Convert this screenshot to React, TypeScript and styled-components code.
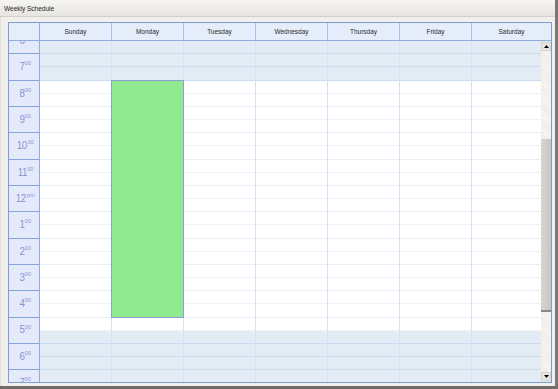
import { useLayoutEffect, useRef } from "react";
import styled, { createGlobalStyle } from "styled-components";

const HOUR = 79 / 3;
const SCROLL = 171;
const days = ["Sunday", "Monday", "Tuesday", "Wednesday", "Thursday", "Friday", "Saturday"];
const hours = Array.from({ length: 24 }, (_, i) => i);

// working time runs from 8:00 to 17:30
const isWork = (t: number) => t >= 8 && t < 17.5;

const label = (h: number) => {
  if (h === 0) return { n: "12", s: "am" };
  if (h === 12) return { n: "12", s: "pm" };
  return { n: String(h > 12 ? h - 12 : h), s: "00" };
};

function App() {
  const viewRef = useRef<HTMLDivElement>(null);

  useLayoutEffect(() => {
    if (viewRef.current) viewRef.current.scrollTop = SCROLL;
  }, []);

  return (
    <Window>
      <GlobalStyle />
      <TitleBar>Weekly Schedule</TitleBar>
      <Body>
        <Frame>
          <Header>
            <Corner />
            {days.map((d, i) => (
              <DayHead key={d} $last={i === days.length - 1}>
                {d}
              </DayHead>
            ))}
          </Header>
          <Main>
            <Viewport ref={viewRef}>
              <Grid>
                <TimeColumn>
                  {hours.map((h) => {
                    const l = label(h);
                    return (
                      <TimeCell key={h}>
                        <Num>{l.n}</Num>
                        <Sup>{l.s}</Sup>
                      </TimeCell>
                    );
                  })}
                </TimeColumn>
                {days.map((d, i) => (
                  <DayColumn key={d} $last={i === days.length - 1}>
                    {hours.map((h) => (
                      <Slot key={h}>
                        <Half $work={isWork(h)} $end={false} />
                        <Half $work={isWork(h + 0.5)} $end />
                      </Slot>
                    ))}
                    {d === "Monday" && (
                      <Appointment
                        style={{ top: 8 * HOUR - 1, height: 9 * HOUR + 1 }}
                      />
                    )}
                  </DayColumn>
                ))}
              </Grid>
            </Viewport>
            <ScrollBar>
              <ArrowButton>
                <svg width="5" height="3" viewBox="0 0 5 3">
                  <path d="M0 3 L2.5 0 L5 3 Z" fill="#000" />
                </svg>
              </ArrowButton>
              <Track>
                <Thumb />
              </Track>
              <ArrowButton>
                <svg width="5" height="3" viewBox="0 0 5 3">
                  <path d="M0 0 L2.5 3 L5 0 Z" fill="#000" />
                </svg>
              </ArrowButton>
            </ScrollBar>
          </Main>
        </Frame>
      </Body>
    </Window>
  );
}

export default App;

const GlobalStyle = createGlobalStyle`
  body {
    margin: 0;
    background: #f1efec;
  }
  * {
    box-sizing: border-box;
  }
`;

const Window = styled.div`
  width: 558px;
  height: 389px;
  display: flex;
  flex-direction: column;
  background: #f1efec;
  border-right: 3px solid #7a7875;
  border-bottom: 3px solid #6e6c69;
  font-family: "Liberation Sans", Arial, sans-serif;
  overflow: hidden;
`;

const TitleBar = styled.div`
  height: 17px;
  flex: none;
  padding-left: 4px;
  display: flex;
  align-items: center;
  font-size: 6.5px;
  color: #1e1e1e;
  background: linear-gradient(#f6f5f3, #e7e5e1);
  border-bottom: 1px solid #d3d0cb;
`;

const Body = styled.div`
  flex: 1;
  padding: 5px 0 0 7px;
  border-left: 1px solid #e2dfdb;
`;

const Frame = styled.div`
  width: 544px;
  height: 361px;
  border: 1px solid #7d9dd6;
  display: flex;
  flex-direction: column;
  background: #fff;
`;

const Header = styled.div`
  height: 18px;
  flex: none;
  display: flex;
  background: #e5edfb;
  border-bottom: 1px solid #8eacde;
`;

const Corner = styled.div`
  width: 31px;
  border-right: 1px solid #8eacde;
`;

const DayHead = styled.div<{ $last?: boolean }>`
  width: ${(p) => (p.$last ? 79 : 72)}px;
  border-right: ${(p) => (p.$last ? "none" : "1px solid #a9c0e8")};
  display: flex;
  align-items: center;
  justify-content: center;
  font-size: 6.5px;
  color: #2b2b2b;
`;

const Main = styled.div`
  flex: 1;
  display: flex;
  min-height: 0;
`;

const Viewport = styled.div`
  flex: 1;
  overflow-y: scroll;
  scrollbar-width: none;
  &::-webkit-scrollbar {
    display: none;
  }
`;

const Grid = styled.div`
  display: flex;
`;

const TimeColumn = styled.div`
  width: 31px;
  flex: none;
  background: #e4eafb;
  border-right: 1px solid #8eacde;
`;

const TimeCell = styled.div`
  height: ${HOUR}px;
  display: flex;
  align-items: center;
  justify-content: center;
  padding-left: 2px;
  border-bottom: 1px solid #86a5da;
  color: #8993cf;
`;

const Num = styled.span`
  font-size: 11.5px;
  letter-spacing: -0.6px;
  transform: scaleX(0.85);
  line-height: 1;
`;

const Sup = styled.span`
  font-size: 5.5px;
  align-self: center;
  margin-top: -7px;
`;

const DayColumn = styled.div<{ $last?: boolean }>`
  position: relative;
  width: ${(p) => (p.$last ? 69 : 72)}px;
  flex: none;
  border-right: ${(p) => (p.$last ? "none" : "1px solid #d6e1f5")};
`;

const Slot = styled.div`
  height: ${HOUR}px;
  display: flex;
  flex-direction: column;
`;

const Half = styled.div<{ $work: boolean; $end: boolean }>`
  flex: 1;
  background: ${(p) => (p.$work ? "#ffffff" : "#e3ebf4")};
  border-bottom: 1px
    ${(p) =>
      p.$work
        ? p.$end
          ? "dotted #d6def2"
          : "dotted #e0e6f5"
        : "solid #cddbf0"};
`;

const Appointment = styled.div`
  position: absolute;
  left: -1px;
  right: -1px;
  background: #91ea8f;
  border: 1px solid #8aa2cf;
`;

const ScrollBar = styled.div`
  width: 10px;
  flex: none;
  display: flex;
  flex-direction: column;
  background: #ece9e2;
  padding: 1px 0;
`;

const ArrowButton = styled.div`
  height: 9px;
  flex: none;
  display: flex;
  align-items: center;
  justify-content: center;
  background: #e9e6df;
  border: 1px solid #d8d4cc;
`;

const Track = styled.div`
  flex: 1;
  padding-top: 88px;
  background-color: #efece6;
  background-image: repeating-linear-gradient(
    45deg,
    transparent 0 1px,
    rgba(255, 255, 255, 0.5) 1px 2px
  );
`;

const Thumb = styled.div`
  height: 173px;
  background: linear-gradient(90deg, #d9d5ce, #c9c5bd);
  border-bottom: 2px solid #8a8782;
`;
